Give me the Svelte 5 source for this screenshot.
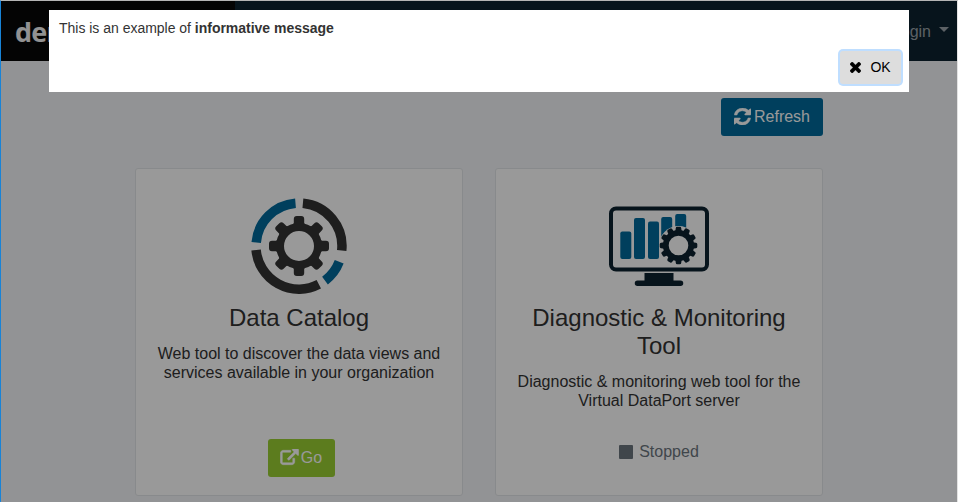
<script>
  const tools = [
    {
      id: 'catalog',
      title: 'Data Catalog',
      text: 'Web tool to discover the data views and services available in your organization',
      running: true
    },
    {
      id: 'monitor',
      title: 'Diagnostic & Monitoring Tool',
      text: 'Diagnostic & monitoring web tool for the Virtual DataPort server',
      running: false
    }
  ];
  const eight = [0, 45, 90, 135, 180, 225, 270, 315];
  const twelve = Array.from({ length: 12 }, (_, i) => i * 30);
</script>

<div class="page">
  <header>
    <div class="brand"><span>den</span></div>
    <div class="login">Login <i class="caret"></i></div>
  </header>
  <main>
    <div class="toolbar">
      <button class="refresh">
        <svg width="17" height="17" viewBox="0 0 1536 1536"><path fill="currentColor" stroke="currentColor" stroke-width="40" d="M1511 928q0 5-1 7-64 268-268 434.500T764 1536q-146 0-282.500-55T238 1324l-129 129q-19 19-45 19t-45-19-19-45V960q0-26 19-45t45-19h448q26 0 45 19t19 45-19 45l-137 137q71 66 161 102t187 36q134 0 250-65t186-179q11-17 53-117 8-23 30-23h192q13 0 22.500 9.500t9.500 22.500zm25-800v448q0 26-19 45t-45 19h-448q-26 0-45-19t-19-45 19-45l138-138Q969 256 768 256q-134 0-250 65T332 500q-11 17-53 117-8 23-30 23H50q-13 0-22.500-9.500T18 608v-7q65-268 270-434.500T768 0q146 0 284 55.500T1297 212l130-129q19-19 45-19t45 19 19 45z"/></svg>
        Refresh
      </button>
    </div>
    <div class="cards">
      {#each tools as tool (tool.id)}
        <section>
          {#if tool.id === 'catalog'}
            <svg class="art" width="100" height="100" viewBox="0 0 100 100">
              <g fill="none" stroke-width="9.5">
                <path stroke="#333" d="M53.900 7.200A43 43 0 0 1 92.700 54.600M7.100 54A43 43 0 0 0 69.800 88.300"/>
                <path stroke="#006a9c" d="M7.200 46.500A43 43 0 0 1 46.500 7.200M90.200 65.800A43 43 0 0 1 76 84.600"/>
              </g>
              <g transform="translate(50 50)" fill="#333">
                {#each eight as angle}
                  <path transform="rotate({angle})" d="M-7-20L-5.200-23V-27Q-5.200-30-2.200-30H2.200Q5.200-30 5.200-27V-23L7-20Z"/>
                {/each}
                <circle r="19" fill="none" stroke="#333" stroke-width="8"/>
              </g>
            </svg>
          {:else}
            <svg class="art" width="100" height="100" viewBox="0 0 100 100">
              <rect x="2" y="12.500" width="96" height="61" rx="5" fill="none" stroke="#0d2230" stroke-width="4"/>
              <path fill="#0d2230" d="M35.500 77H64.500V84.500H71.500A2.700 2.700 0 0 1 71.500 90H28.500A2.700 2.700 0 0 1 28.500 84.500H35.500Z"/>
              <g fill="#006a9c">
                <rect x="11.300" y="35.500" width="11" height="27.500" rx="2"/>
                <rect x="25" y="22" width="11" height="41" rx="2"/>
                <rect x="39" y="25.500" width="11" height="37.500" rx="2"/>
                <rect x="52.200" y="21" width="11" height="30" rx="2"/>
                <rect x="66.200" y="18" width="11" height="30" rx="2"/>
              </g>
              <g transform="translate(69.500 49.500)">
                <circle r="19.500" fill="#fff"/>
                <circle r="12.700" fill="none" stroke="#0d2230" stroke-width="5.800"/>
                {#each twelve as angle}
                  <path fill="#0d2230" transform="rotate({angle})" d="M-3.200-14L-2.700-17.500Q-2.600-18.800-1.300-18.800H1.300Q2.600-18.800 2.700-17.500L3.200-14Z"/>
                {/each}
              </g>
            </svg>
          {/if}
          <h4>{tool.title}</h4>
          <p>{tool.text}</p>
          {#if tool.running}
            <button class="go">
              <svg width="19" height="17" viewBox="0 0 1792 1664"><path fill="currentColor" stroke="currentColor" stroke-width="50" d="M1408 928v320q0 119-84.500 203.500T1120 1536H288q-119 0-203.500-84.500T0 1248V416q0-119 84.500-203.500T288 128h704q14 0 23 9t9 23v128q0 14-9 23t-23 9H288q-40 0-68 28t-28 68v832q0 40 28 68t68 28h832q40 0 68-28t28-68V928q0-14 9-23t23-9h128q14 0 23 9t9 23zM1792 64v512q0 26-19 45t-45 19-45-19l-176-176-652 652q-10 10-23 10t-23-10L695 983q-10-10-10-23t10-23l652-652-176-176q-19-19-19-45t19-45 45-19h512q26 0 45 19t19 45z"/></svg>Go
            </button>
          {:else}
            <div class="state"><i class="square"></i>Stopped</div>
          {/if}
        </section>
      {/each}
    </div>
  </main>
</div>
<div class="backdrop"></div>
<div class="frame"></div>
<div class="dialog" role="dialog">
  <div class="message">This is an example of <b>informative message</b></div>
  <button class="ok">
    <svg width="11" height="11" viewBox="0 0 1188 1188"><path fill="currentColor" stroke="currentColor" stroke-width="30" d="M1188 956q0 40-28 68l-136 136q-28 28-68 28t-68-28L594 866l-294 294q-28 28-68 28t-68-28L28 1024Q0 996 0 956t28-68l294-294L28 300Q0 272 0 232t28-68L164 28q28-28 68-28t68 28l294 294L888 28q28-28 68-28t68 28l136 136q28 28 28 68t-28 68L866 594l294 294q28 28 28 68z"/></svg>
    <span>OK</span>
  </button>
</div>

<style>
  :global(body) { margin: 0; overflow: hidden; }
  .page {
    box-sizing: border-box;
    width: 958px;
    height: 502px;
    padding: 1px 1px 0;
    overflow: hidden;
    background: #f4f6f9;
    color: #333;
    font: 16px/19px "Liberation Sans", Arial, sans-serif;
  }
  button { font-family: inherit; cursor: pointer; }
  header { display: flex; justify-content: space-between; height: 60px; background: #0d2230; }
  .brand {
    box-sizing: border-box;
    width: 234px;
    padding-left: 14px;
    background: #080808;
    color: #f4f4f4;
    font: bold 27px/62px "Open Sans", sans-serif;
    letter-spacing: -0.8px;
  }
  .brand span { display: block; width: 34px; overflow: hidden; }
  .login { display: flex; align-items: center; gap: 8px; padding-right: 8px; color: #9aa2a8; }
  .caret { border: 5px solid transparent; border-top-color: currentColor; border-bottom: 0; margin-bottom: 3px; }
  main { width: 688px; margin: 37px 0 0 134px; }
  .toolbar { display: flex; justify-content: flex-end; }
  .refresh, .go {
    display: flex;
    align-items: center;
    justify-content: center;
    height: 38px;
    padding: 0;
    border: 0;
    border-radius: 3px;
    color: #fff;
    font-size: 16px;
  }
  .refresh { width: 102px; gap: 3px; padding-bottom: 1px; background: #006a9c; }
  .go { width: 67px; gap: 2px; margin: auto 0 0 4px; padding-bottom: 1px; background: #99cf33; }
  .cards { display: flex; gap: 32px; margin-top: 32px; }
  section {
    box-sizing: border-box;
    display: flex;
    flex-direction: column;
    align-items: center;
    width: 328px;
    height: 328px;
    padding: 27px 20px 18px;
    border: 1px solid #e3e6ea;
    border-radius: 3px;
    background: #fff;
    text-align: center;
  }
  .art { flex: none; }
  h4 { margin: 8px 0 12px; font-size: 24px; font-weight: 400; line-height: 28px; }
  p { margin: 0; }
  .state { display: flex; align-items: center; gap: 6px; margin-top: auto; padding-bottom: 16px; color: #6c757d; }
  .square { width: 14px; height: 14px; border-radius: 1px; background: currentColor; }
  .backdrop { position: absolute; inset: 0; background: rgba(0, 0, 0, 0.4); }
  .frame {
    position: absolute;
    inset: 0;
    border: 1px solid #b5b5b5;
    border-left-color: #1883d7;
    border-right-color: #e2e2e2;
    border-bottom: 0;
  }
  .dialog {
    position: absolute;
    top: 10px;
    left: 49px;
    box-sizing: border-box;
    display: flex;
    flex-direction: column;
    justify-content: space-between;
    width: 860px;
    height: 82px;
    padding: 10px 8px 8px 10px;
    background: #fff;
    color: #333;
    font: 14px/16px "Liberation Sans", Arial, sans-serif;
  }
  .message { letter-spacing: -0.015px; }
  .ok {
    align-self: flex-end;
    display: flex;
    align-items: center;
    justify-content: center;
    gap: 9px;
    width: 61px;
    height: 33px;
    padding: 0;
    border: 0;
    border-radius: 3px;
    background: #ddd;
    box-shadow: 0 0 0 2px #bfdeff;
    color: #000;
    font-size: 14px;
  }
  .ok span { padding-bottom: 2px; }
</style>
